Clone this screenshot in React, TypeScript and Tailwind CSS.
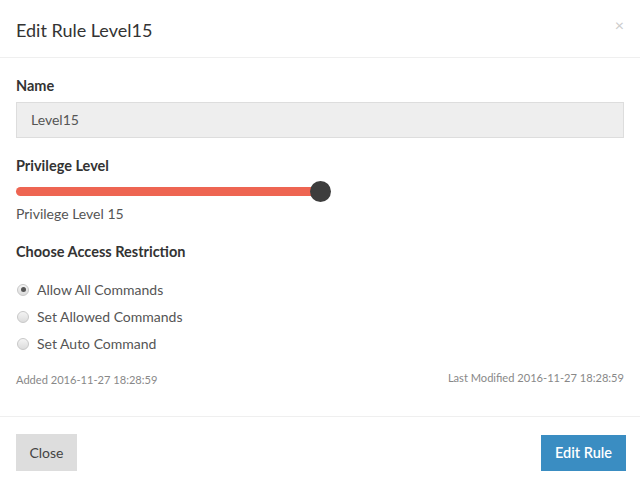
import React from "react";

export default function App() {
  return (
    <div className="w-[640px] h-[483px] bg-white text-[#333] overflow-hidden" style={{ fontFamily: "Lato, 'Noto Sans', sans-serif" }}>
      <div className="h-[58px] flex items-center justify-between pl-4 pr-[16px] border-b border-[#efefef]">
        <h1 className="text-[18px] text-[#333] leading-none pt-[2px]">Edit Rule Level15</h1>
        <span className="text-[#ccc] text-[16px] leading-none -mt-[8px]">×</span>
      </div>
      <div className="px-4 pt-[21px] h-[359px] border-b border-[#efefef]">
        <div className="text-[14.5px] font-bold leading-none">Name</div>
        <div className="mt-[8px] h-[36px] bg-[#eeeeee] border border-[#dddddd] flex items-center pl-[14px] text-[14px] text-[#555]">Level15</div>
        <div className="mt-[21px] text-[14.5px] font-bold leading-none">Privilege Level</div>
        <div className="mt-[8px] relative h-[22px] w-[316px]">
          <div className="absolute left-0 top-[6px] h-[9px] w-[300px] rounded-full bg-[#ee6552]" />
          <div className="absolute left-[294px] top-0 w-[21px] h-[21px] rounded-full bg-[#3d3d3d]" />
        </div>
        <div className="mt-[4px] text-[14px] text-[#555] leading-none">Privilege Level 15</div>
        <div className="mt-[24px] text-[14.5px] font-bold leading-none">Choose Access Restriction</div>
        <div className="mt-[22px] flex flex-col gap-[11px] text-[14px] text-[#555]">
          {[
            ["Allow All Commands", true],
            ["Set Allowed Commands", false],
            ["Set Auto Command", false],
          ].map(([label, checked]) => (
            <div key={label as string} className="flex items-center h-[16px]">
              <span className="w-[12px] h-[12px] rounded-full border border-[#c8c8c8] bg-gradient-to-b from-[#f4f4f4] to-[#dcdcdc] flex items-center justify-center ml-[1px]">
                {checked && <span className="w-[5px] h-[5px] rounded-full bg-[#555]" />}
              </span>
              <span className="ml-[8px]">{label as string}</span>
            </div>
          ))}
        </div>
        <div className="mt-[20px] flex justify-between items-start text-[11.1px] text-[#888] leading-none">
          <span className="mt-[2px]">Added 2016-11-27 18:28:59</span>
          <span>Last Modified 2016-11-27 18:28:59</span>
        </div>
      </div>
      <div className="pl-4 pr-[14px] pt-[17px] flex justify-between items-start">
        <button className="h-[37px] w-[61px] bg-[#dddddd] text-[14px] text-[#444]">Close</button>
        <button className="mt-[1px] h-[36px] w-[85px] bg-[#3a8dc2] text-[14.5px] text-white font-semibold">Edit Rule</button>
      </div>
    </div>
  );
}
